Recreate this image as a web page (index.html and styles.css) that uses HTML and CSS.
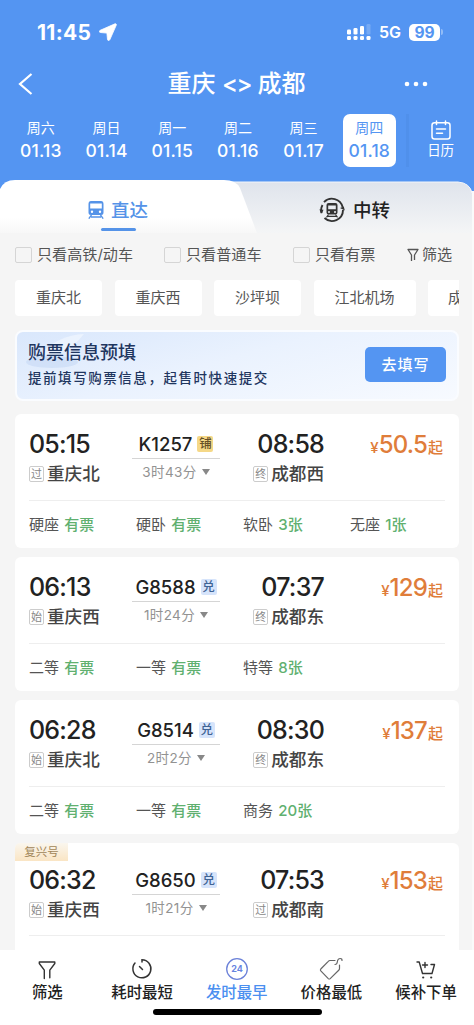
FILE: index.html
```html
<!DOCTYPE html>
<html lang="zh-CN">
<head>
<meta charset="utf-8">
<meta name="viewport" content="width=device-width, initial-scale=1">
<title>重庆 - 成都</title>
<link rel="stylesheet" href="styles.css">
</head>
<body>
<div class="app">
  <header class="header">
    <div class="status">
      <span class="clock">11:45</span>
      <svg class="arrow" width="18" height="18" viewBox="0 0 18 18"><path d="M16 .8 1.200 7.300c-1.300.6-1 2.100.3 2.200l6.400.6.600 6.300c.1 1.300 1.700 1.600 2.300.4L17.300 2.100c.3-.9-.4-1.600-1.300-1.300z" fill="#fff" stroke="#fff" stroke-width=".8"/></svg>
      <svg class="signal" width="24" height="17" viewBox="0 0 24 17" fill="#fff"><rect x="0" y="5.500" width="4" height="5" rx="1.300"/><rect x="6.500" y="4" width="4" height="6.500" rx="1.300"/><rect x="13" y="2" width="4" height="8.500" rx="1.300"/><rect x="19.500" y="0" width="4" height="10.500" rx="1.300" opacity=".2"/><rect x="0" y="12" width="4" height="4" rx="1.300"/><rect x="6.500" y="12" width="4" height="4" rx="1.300"/><rect x="13" y="12" width="4" height="4" rx="1.300"/><rect x="19.500" y="12" width="4" height="4" rx="1.300"/></svg>
      <span class="net">5G</span>
      <span class="battery">99</span><span class="cap"></span>
    </div>
    <div class="title-row">
      <svg class="back" width="16" height="22" viewBox="0 0 16 22"><path d="M13.500 1 2 11l11.500 10" fill="none" stroke="#fff" stroke-width="2.200"/></svg>
      <h1>重庆 <span class="swap">&lt;&gt;</span> 成都</h1>
      <svg class="more" width="24" height="6" viewBox="0 0 24 6" fill="#fff"><circle cx="3" cy="3" r="2.300"/><circle cx="12" cy="3" r="2.300"/><circle cx="21" cy="3" r="2.300"/></svg>
    </div>
    <div class="dates">
      <div class="date"><span>周六</span><b>01.13</b></div>
      <div class="date"><span>周日</span><b>01.14</b></div>
      <div class="date"><span>周一</span><b>01.15</b></div>
      <div class="date"><span>周二</span><b>01.16</b></div>
      <div class="date"><span>周三</span><b>01.17</b></div>
      <div class="date"><div class="pill"><span>周四</span><b>01.18</b></div></div>
      <div class="calendar">
        <svg width="20" height="20" viewBox="0 0 20 20" fill="none" stroke="#fff" stroke-width="1.500" stroke-linecap="round"><rect x="1" y="2.800" width="18" height="16.200" rx="2.500"/><path d="M5.500 1v3.500M14.500 1v3.500M5.500 9h9M5.500 13.200h6"/></svg>
        <span>日历</span>
      </div>
    </div>
  </header>

  <nav class="tabs">
    <svg class="tab-shape" width="474" height="53" viewBox="0 0 474 53">
      <defs>
        <linearGradient id="gray" x1="0" y1="0" x2="0" y2="1"><stop offset="0" stop-color="#dfe4ec"/><stop offset="1" stop-color="#f4f5f6"/></linearGradient>
        <linearGradient id="white" x1="0" y1="0" x2="0" y2="1"><stop offset="0" stop-color="#fff"/><stop offset=".7" stop-color="#fff"/><stop offset="1" stop-color="#f7f7f7"/></linearGradient>
      </defs>
      <path d="M468 11h6v42h-6z" fill="#fafafa"/>
      <path d="M200 2H458Q470 3 472 13V53H200z" fill="url(#gray)"/>
      <path d="M220 2H458Q470 3 472 13" fill="none" stroke="#f3f6fb" stroke-width="1"/>
      <path d="M0 53V9Q4 0 15 0H224Q236 0 240 8L257 53z" fill="url(#white)"/>
    </svg>
    <div class="tab active">
      <svg width="16" height="18" viewBox="0 0 16 18"><path fill="#5593e8" fill-rule="evenodd" d="M3 0h10q2.500 0 2.500 3v8.500q0 2.500-2.500 2.500H3Q.5 14 .5 11.500V3Q.5 0 3 0zm-.8 2.500v5h11.600v-5zM4 9.600a1.200 1.200 0 1 0 0 2.400 1.200 1.200 0 0 0 0-2.400zm8 0a1.200 1.200 0 1 0 0 2.400 1.200 1.200 0 0 0 0-2.400z"/><path d="m3.500 14-2.700 3.700M12.500 14l2.700 3.700M3 16h10" stroke="#5593e8" stroke-width="1.300"/></svg>
      <span>直达</span>
    </div>
    <div class="tab transfer">
      <svg width="26" height="26" viewBox="0 0 26 26"><g fill="none" stroke="#333" stroke-width="1.900"><path d="M5 5.100A11 11 0 0 1 23.600 10M24 13A11 11 0 0 1 5.500 21M2.400 16A11 11 0 0 1 3.500 8"/></g><path d="m21 11 3.800-1.500 1 4zM.3 12.500l4.200.3-1.600 4z" fill="#333"/><path fill="#333" fill-rule="evenodd" d="M9.500 6h7q2 0 2 2v7.500q0 2-2 2h-7q-2 0-2-2V8q0-2 2-2zm-.3 2.500v3.700h7.600V8.500zM10 14a1 1 0 1 0 0 2 1 1 0 0 0 0-2zm6 0a1 1 0 1 0 0 2 1 1 0 0 0 0-2z"/><path d="m9.500 17.500-2 2.800m9-2.800 2 2.800M9 19.300h8" stroke="#333" stroke-width="1.200"/></svg>
      <span>中转</span>
    </div>
  </nav>

  <main class="content">
    <div class="filters">
      <label class="f1"><i></i>只看高铁/动车</label>
      <label class="f2"><i></i>只看普通车</label>
      <label class="f3"><i></i>只看有票</label>
      <span class="sift"><svg width="12" height="14" viewBox="0 0 12 14" fill="none" stroke="#555" stroke-width="1.300" stroke-linejoin="round"><path d="M4.500 13V7L1 1.500h10L7.500 7v5"/></svg>筛选</span>
    </div>
    <div class="chips">
      <span class="chip">重庆北</span><span class="chip">重庆西</span><span class="chip">沙坪坝</span><span class="chip wide">江北机场</span><span class="chip last">成</span>
    </div>
    <section class="banner">
      <svg class="swoosh" width="80" height="38" viewBox="0 0 80 38"><ellipse cx="32" cy="30" rx="26" ry="6" fill="#c6d8f5" opacity=".6"/><path d="M18 24 Q38 3 64 2 Q55 14 38 22z" fill="#f6faff" opacity=".55"/></svg>
      <div class="banner-text"><strong>购票信息预填</strong><span>提前填写购票信息，起售时快速提交</span></div>
      <button>去填写</button>
    </section>

    <article class="card">
      <div class="trip">
        <div class="stop"><b>05:15</b><p><i>过</i>重庆北</p></div>
        <div class="train"><strong>K1257<em class="gold">铺</em></strong><hr><small>3时43分<u></u></small></div>
        <div class="stop end"><b>08:58</b><p><i>终</i>成都西</p></div>
        <div class="price"><small>¥</small><b>50.5</b><span>起</span></div>
      </div>
      <div class="seats"><span>硬座 <b>有票</b></span><span>硬卧 <b>有票</b></span><span>软卧 <b>3张</b></span><span>无座 <b>1张</b></span></div>
    </article>
    <article class="card">
      <div class="trip">
        <div class="stop"><b>06:13</b><p><i>始</i>重庆西</p></div>
        <div class="train"><strong>G8588<em>兑</em></strong><hr><small>1时24分<u></u></small></div>
        <div class="stop end"><b>07:37</b><p><i>终</i>成都东</p></div>
        <div class="price"><small>¥</small><b>129</b><span>起</span></div>
      </div>
      <div class="seats"><span>二等 <b>有票</b></span><span>一等 <b>有票</b></span><span>特等 <b>8张</b></span></div>
    </article>
    <article class="card">
      <div class="trip">
        <div class="stop"><b>06:28</b><p><i>始</i>重庆北</p></div>
        <div class="train"><strong>G8514<em>兑</em></strong><hr><small>2时2分<u></u></small></div>
        <div class="stop end"><b>08:30</b><p><i>终</i>成都东</p></div>
        <div class="price"><small>¥</small><b>137</b><span>起</span></div>
      </div>
      <div class="seats"><span>二等 <b>有票</b></span><span>一等 <b>有票</b></span><span>商务 <b>20张</b></span></div>
    </article>
    <article class="card tagged">
      <span class="fuxing">复兴号</span>
      <div class="trip">
        <div class="stop"><b>06:32</b><p><i>始</i>重庆西</p></div>
        <div class="train"><strong>G8650<em>兑</em></strong><hr><small>1时21分<u></u></small></div>
        <div class="stop end"><b>07:53</b><p><i>过</i>成都南</p></div>
        <div class="price"><small>¥</small><b>153</b><span>起</span></div>
      </div>
    </article>
  </main>

  <footer class="bottom">
    <div class="actions">
      <div class="action"><svg width="24" height="24" viewBox="0 0 24 24" fill="none" stroke="#333" stroke-width="1.400" stroke-linejoin="round" stroke-linecap="round"><path d="M9.300 21.500v-8.300L4.300 6.500V5h15.500v1.500l-5 6.700v7.500"/></svg><span>筛选</span></div>
      <div class="action"><svg width="24" height="24" viewBox="0 0 24 24" fill="none" stroke="#333" stroke-width="1.500" stroke-linecap="round"><path d="M12 5V2.800A9 9 0 1 1 5 6M9.500 9.500l3 3"/></svg><span>耗时最短</span></div>
      <div class="action current"><svg width="24" height="24" viewBox="0 0 24 24"><circle cx="12" cy="12" r="10.300" fill="none" stroke="#6c82d9" stroke-width="1.300"/><text x="12" y="15.200" text-anchor="middle">24</text></svg><span>发时最早</span></div>
      <div class="action"><svg width="24" height="24" viewBox="0 0 24 24" fill="none" stroke="#666" stroke-width="1.200" stroke-linecap="round" stroke-linejoin="round"><path d="M16 3.500h-5q-1 0-1.700.8L1.800 12q-.8 1 0 1.900l7.500 7.700q1 .8 1.900 0l8.500-8.400q.8-.8.800-1.800V8M16 7.500q2 0 2.300-2.500.4-3.500 3-3.500 1.800 0 1.700 2"/></svg><span>价格最低</span></div>
      <div class="action"><svg width="24" height="24" viewBox="0 0 24 24" fill="none" stroke="#333" stroke-width="1.400" stroke-linecap="round" stroke-linejoin="round"><path d="M3 5h2.200l3.300 11.500H18L20.500 7.500H17M8.500 8h5M11 5.500v5"/><circle cx="9.200" cy="20.500" r="1.100" fill="#333" stroke="none"/><circle cx="17.200" cy="20.500" r="1.100" fill="#333" stroke="none"/></svg><span>候补下单</span></div>
    </div>
    <div class="home"></div>
  </footer>
</div>
</body>
</html>
```

FILE: styles.css
```css
* { box-sizing: border-box; margin: 0; }
body { margin: 0; background: #f5f5f5; }
.app {
  width: 474px; height: 1025px; overflow: hidden;
  display: flex; flex-direction: column;
  font-family: Inter, "Noto Sans CJK SC", sans-serif;
  color: #333; background: #f5f5f5; white-space: nowrap;
}
i, em { font-style: normal; }
u { text-decoration: none; }
svg { display: block; flex: none; }

.header { height: 180px; flex: none; background: #5495f2; color: #fff; }
.status { height: 52px; padding: 12px 31px 0 37px; display: flex; align-items: center; }
.clock { font-size: 21px; font-weight: 700; width: 55px; letter-spacing: .3px; }
.arrow { margin-left: 7px; }
.signal { margin-left: auto; }
.net { width: 24px; margin-left: 8px; font-size: 16px; font-weight: 600; }
.battery { width: 31px; height: 17px; margin-left: 6px; border-radius: 5px; background: #fff; color: #5495f2; font-size: 15.500px; font-weight: 700; line-height: 17px; text-align: center; }
.cap { width: 2px; height: 6px; margin-left: 1px; border-radius: 0 2px 2px 0; background: #92bcf7; }
.title-row { height: 62px; padding: 2px 46px 0 18px; display: grid; grid-template-columns: 52px 1fr 24px; align-items: center; }
.title-row h1 { font-size: 24px; font-weight: 500; line-height: 60px; text-align: center; padding-left: 0; margin-left: -20px; margin-right: 12px; }
.title-row h1 { margin-left: 0; margin-right: 1px; }
.swap { font-size: 24px; letter-spacing: -1.500px; }
.dates { height: 53px; display: flex; padding-left: 8px; }
.date { width: 65.700px; display: flex; flex-direction: column; align-items: center; padding-top: 4px; }
.date span { font-size: 14px; line-height: 20px; }
.date b { font-size: 17.500px; line-height: 26px; font-weight: 500; letter-spacing: .2px; }
.pill { width: 53px; height: 53px; margin-top: -4px; padding-top: 4px; border-radius: 7px; background: #fff; color: #5495f2; display: flex; flex-direction: column; align-items: center; }
.calendar { width: 66px; margin-left: 4px; display: flex; flex-direction: column; align-items: center; padding-top: 6px; border-left: 3px solid #5090eb; font-size: 13.500px; line-height: 20px; }

.tabs { height: 53px; flex: none; display: flex; position: relative; background: #5495f2; }
.tab-shape { position: absolute; inset: 0; }
.tab { position: relative; display: flex; align-items: center; height: 60px; font-size: 18.500px; font-weight: 500; }
.tab span { position: relative; top: -1px; }
.active { width: 237px; padding-left: 88px; gap: 7px; color: #5593e8; }
.active::after { content: ""; position: absolute; left: 101px; top: 48px; width: 35px; height: 3px; border-radius: 2px; background: #5593e8; }
.transfer { padding-left: 82px; gap: 8px; color: #222; }

.content { flex: 1; min-height: 0; overflow: hidden; padding: 12px 13px 0 15px; border-right: 2px solid #fafafa; }
.filters { height: 20px; display: flex; align-items: center; font-size: 15.100px; line-height: 20px; color: #555; padding-bottom: 1px; }
.filters label { display: flex; align-items: center; gap: 5px; }
.filters i { width: 17px; height: 16px; border: 1px solid #d5d5d5; border-radius: 2px; }
.f1 { width: 149px; }
.f2 { width: 129px; }
.f3 { width: 114px; }
.sift { display: flex; align-items: center; gap: 3px; }
.chips { height: 36px; margin-top: 15px; display: flex; gap: 12.500px; overflow: hidden; font-size: 15px; line-height: 35px; color: #555; }
.chip { width: 87px; flex: none; border-radius: 4px; background: #fff; text-align: center; }
.wide { width: 102px; }
.last { width: 31px; text-align: left; padding-left: 20px; overflow: hidden; border-radius: 4px 0 0 4px; }
.banner { position: relative; height: 71px; margin-top: 14px; padding: 0 11px 2px 11px; border: 2px solid #fafcff; border-radius: 8px; background: linear-gradient(165deg, #d9e7fc, #eaf2fe 45%, #f7faff); display: flex; align-items: center; justify-content: space-between; color: #1f365f; }
.swoosh { position: absolute; left: 3px; top: 0; }
.banner-text { position: relative; display: flex; flex-direction: column; }
.banner strong { font-size: 18px; line-height: 26px; font-weight: 500; }
.banner-text span { font-size: 13.500px; line-height: 24px; letter-spacing: 1.550px; font-weight: 500; }
.banner button { width: 81px; height: 35px; border: 0; border-radius: 5px; background: #5495f2; color: #fff; font: 500 15px/35px Inter, "Noto Sans CJK SC", sans-serif; letter-spacing: 1px; padding: 0; }

.card { height: 134px; margin-top: 9px; padding: 0 14px 0; border-radius: 6px; background: #fff; }
.banner + .card { margin-top: 13px; }
.trip { height: 86px; padding-top: 14px; display: grid; grid-template-columns: 103px 88px 104px 1fr; }
.stop { display: flex; flex-direction: column; }
.stop b { font-size: 25px; line-height: 32px; font-weight: 550; color: #222; letter-spacing: -.8px; }
.stop p { display: flex; align-items: center; gap: 3px; line-height: 27px; font-size: 17.600px; font-weight: 500; color: #444; }
.stop i { width: 15px; height: 16px; border: 1px solid #ccc; border-radius: 2px; font-size: 11px; line-height: 14px; text-align: center; font-weight: 400; color: #888; }
.end { align-items: flex-end; }
.train { display: flex; flex-direction: column; align-items: center; padding-top: 3px; }
.train strong { display: flex; align-items: center; gap: 5px; font-size: 18.500px; line-height: 26px; font-weight: 550; color: #222; }
.train em { width: 16px; height: 16px; border-radius: 2px; background: #d6e4fb; color: #3f6394; font-size: 12.500px; line-height: 16px; text-align: center; }
.train em.gold { background: #f5d887; color: #665027; }
.train hr { width: 88px; height: 1px; border: 0; background: #d5d5d5; margin: 1px 0; }
.train small { display: flex; align-items: center; gap: 5px; font-size: 13.500px; line-height: 24px; letter-spacing: .4px; color: #929292; }
.train u { border: 4.500px solid transparent; border-top: 6px solid #888; border-bottom: 0; }
.price { display: flex; justify-content: flex-end; align-items: baseline; padding-right: 2px; line-height: 34px; color: #df7d3a; }
.price small { font-size: 15px; font-weight: 500; }
.price b { font-size: 24px; font-weight: 550; letter-spacing: -.8px; margin-right: 1px; }
.price span { font-size: 15px; font-weight: 500; }
.seats { height: 48px; display: grid; grid-template-columns: repeat(4, 107px); border-top: 1px solid #eee; font-size: 15px; line-height: 47px; color: #555; }
.seats b { margin-left: 1px; color: #60b06f; font-weight: 500; }
.tagged .trip { margin-top: -11px; border-bottom: 1px solid #eee; }
.fuxing { display: block; width: 53px; height: 18px; margin-left: -14px; border-radius: 5px 0 0 0; background: linear-gradient(#faf6ee, #fae5c4); color: #a18659; font-size: 11.500px; line-height: 18px; text-align: center; }

.bottom { height: 75px; flex: none; background: #fff; display: flex; flex-direction: column; align-items: center; }
.actions { width: 474px; height: 59px; display: flex; }
.action { width: 94.700px; display: flex; flex-direction: column; align-items: center; padding-top: 7px; font-size: 15.400px; line-height: 23px; font-weight: 500; color: #222; }
.current { color: #4b8ff0; }
.current text { font: 700 9px Inter, sans-serif; fill: #6784df; }
.home { width: 169px; height: 6px; border-radius: 3px; background: #000; }
```
